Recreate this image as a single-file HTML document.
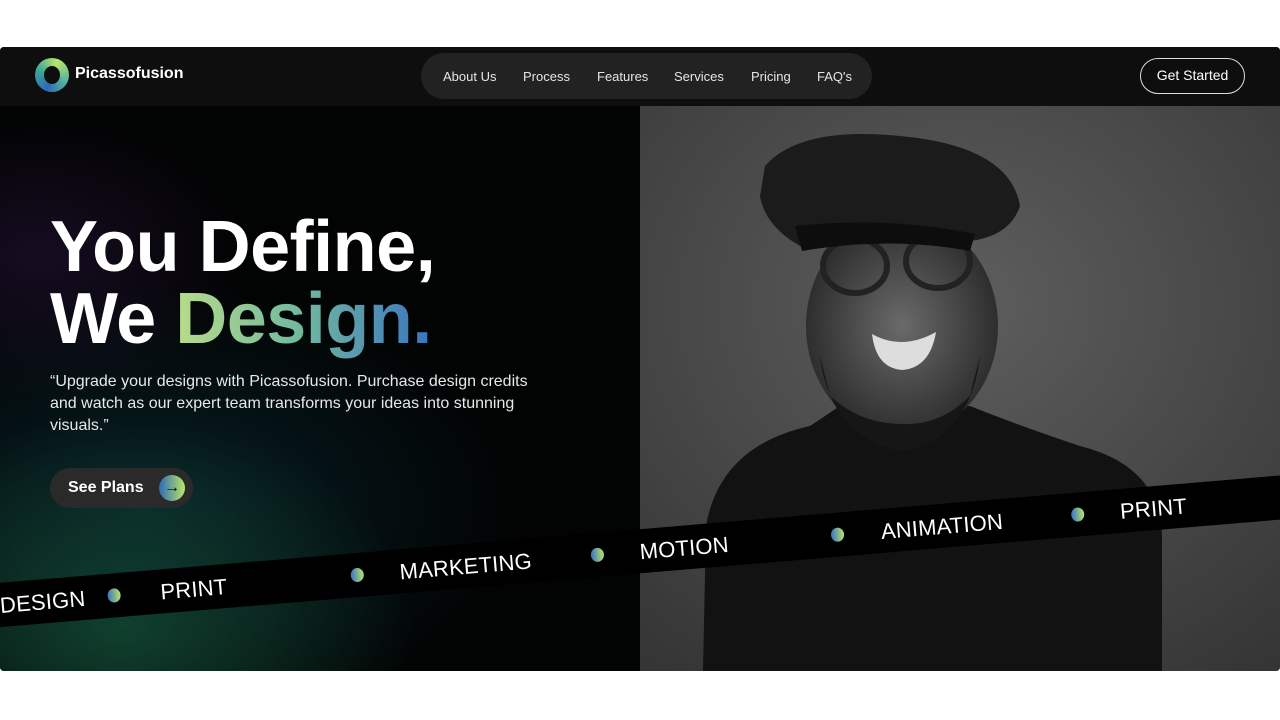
<!DOCTYPE html>
<html><head><meta charset="utf-8"><style>
*{margin:0;padding:0;box-sizing:border-box}
body{width:1280px;height:720px;background:#fff;position:relative;overflow:hidden;font-family:"Liberation Sans",sans-serif}
.main{position:absolute;left:0;top:47px;width:1280px;height:624px;background:#0b0b0b;overflow:hidden;border-radius:4px}
.nav{position:absolute;left:0;top:0;width:1280px;height:59px;background:#0e0e0e}
.left{position:absolute;left:0;top:59px;width:640px;height:565px;background:
radial-gradient(ellipse 420px 300px at 120px 520px,rgba(20,80,55,.75),transparent 70%),
radial-gradient(ellipse 300px 200px at 40px 150px,rgba(60,30,90,.35),transparent 70%),
radial-gradient(ellipse 500px 300px at 150px 400px,rgba(10,50,60,.6),transparent 75%),#020303}
.photo{position:absolute;left:640px;top:59px;width:640px;height:565px}
.logo{position:absolute;left:35px;top:11px;width:34px;height:34px;border-radius:50%;background:conic-gradient(from 200deg,#2e6bb5,#3aa89a,#b9e66a,#5ab7a0,#2e6bb5)}
.logo:after{content:"";position:absolute;left:9px;top:8px;width:16px;height:18px;border-radius:50%;background:#0e0e0e}
.brand{position:absolute;left:75px;top:18px;color:#fff;font-weight:bold;font-size:16px}
.menu{position:absolute;left:421px;top:6px;width:451px;height:46px;border-radius:23px;background:#222;color:#e6e6e6;font-size:13px}
.menu span{position:absolute;top:16px}
.gs{position:absolute;left:1140px;top:11px;width:105px;height:36px;border:1.5px solid #ddd;border-radius:18px;color:#fff;font-size:14px;text-align:center;line-height:33px}
h1{position:absolute;left:50px;top:164px;color:#fff;font-size:72px;line-height:72px;font-weight:bold;letter-spacing:-0.5px}
.g{background:linear-gradient(90deg,#b9dc8a,#6fb7a0 50%,#3a73c0);-webkit-background-clip:text;color:transparent}
.p{position:absolute;left:50px;top:324px;color:#e8e8e8;font-size:16px;line-height:22px;width:500px}
.btn{position:absolute;left:50px;top:421px;width:143px;height:40px;border-radius:20px;background:#2a2a2a;color:#fff;font-weight:bold;font-size:16px}
.btn b{position:absolute;left:18px;top:11px}
.btn i{position:absolute;left:109px;top:7px;width:26px;height:26px;border-radius:50%;background:linear-gradient(90deg,#2e6bb5,#b9e66a);color:#000;font-style:normal;text-align:center;line-height:25px;font-size:16px}
.strip{position:absolute;left:-20px;width:1340px;height:44px;background:#000;transform-origin:20px 22px;transform:rotate(-4.8deg);color:#fff;font-size:22px;top:536px}
.strip span{position:absolute;top:10px;letter-spacing:.2px}
.strip i{position:absolute;top:15px;width:13px;height:14px;border-radius:50%;background:linear-gradient(90deg,#3a73c0,#b9e66a)}
</style></head><body>
<div class="main">
<div class="nav">
<div class="logo"></div><div class="brand">Picassofusion</div>
<div class="menu"><span style="left:22px">About Us</span><span style="left:102px">Process</span><span style="left:176px">Features</span><span style="left:253px">Services</span><span style="left:330px">Pricing</span><span style="left:396px">FAQ's</span></div>
<div class="gs">Get Started</div>
</div>
<div class="left"></div>
<svg class="photo" viewBox="0 0 640 565">
<defs><radialGradient id="bg" cx="0.5" cy="0.35" r="0.8"><stop offset="0" stop-color="#5e5e5e"/><stop offset="1" stop-color="#353535"/></radialGradient>
<radialGradient id="fc" cx="0.5" cy="0.5" r="0.6"><stop offset="0" stop-color="#6a6a6a"/><stop offset="1" stop-color="#222"/></radialGradient></defs>
<rect width="640" height="565" fill="url(#bg)"/>
<path d="M63 565 L66 420 Q80 340 170 320 L200 300 L330 300 Q380 320 440 340 Q520 360 522 430 L522 565Z" fill="#121212"/>
<ellipse cx="262" cy="220" rx="96" ry="110" fill="url(#fc)"/>
<path d="M180 250 Q190 330 260 345 Q330 335 340 250 L330 290 Q300 320 262 318 Q220 318 190 290Z" fill="#161616"/>
<path d="M232 228 Q262 245 296 226 Q290 262 262 264 Q236 262 232 228Z" fill="#ddd"/>
<ellipse cx="215" cy="160" rx="32" ry="27" fill="none" stroke="#222" stroke-width="6"/>
<ellipse cx="298" cy="155" rx="32" ry="27" fill="none" stroke="#222" stroke-width="6"/>
<path d="M125 60 Q160 20 260 30 Q370 40 380 100 Q370 130 330 135 L160 140 Q125 120 120 90Z" fill="#1b1b1b"/>
<path d="M155 120 Q250 110 335 128 L330 145 Q250 130 162 145Z" fill="#0d0d0d"/>
</svg>
<div class="strip">
<span style="left:20px">DESIGN</span><i style="left:128px"></i><span style="left:181px">PRINT</span><i style="left:372px"></i><span style="left:421px">MARKETING</span><i style="left:613px"></i><span style="left:662px">MOTION</span><i style="left:854px"></i><span style="left:904px">ANIMATION</span><i style="left:1095px"></i><span style="left:1144px">PRINT</span>
</div>
<h1>You Define,<br>We <span class="g">Design.</span></h1>
<div class="p">“Upgrade your designs with Picassofusion. Purchase design credits and watch as our expert team transforms your ideas into stunning visuals.”</div>
<div class="btn"><b>See Plans</b><i>→</i></div>
</div>
</body></html>
